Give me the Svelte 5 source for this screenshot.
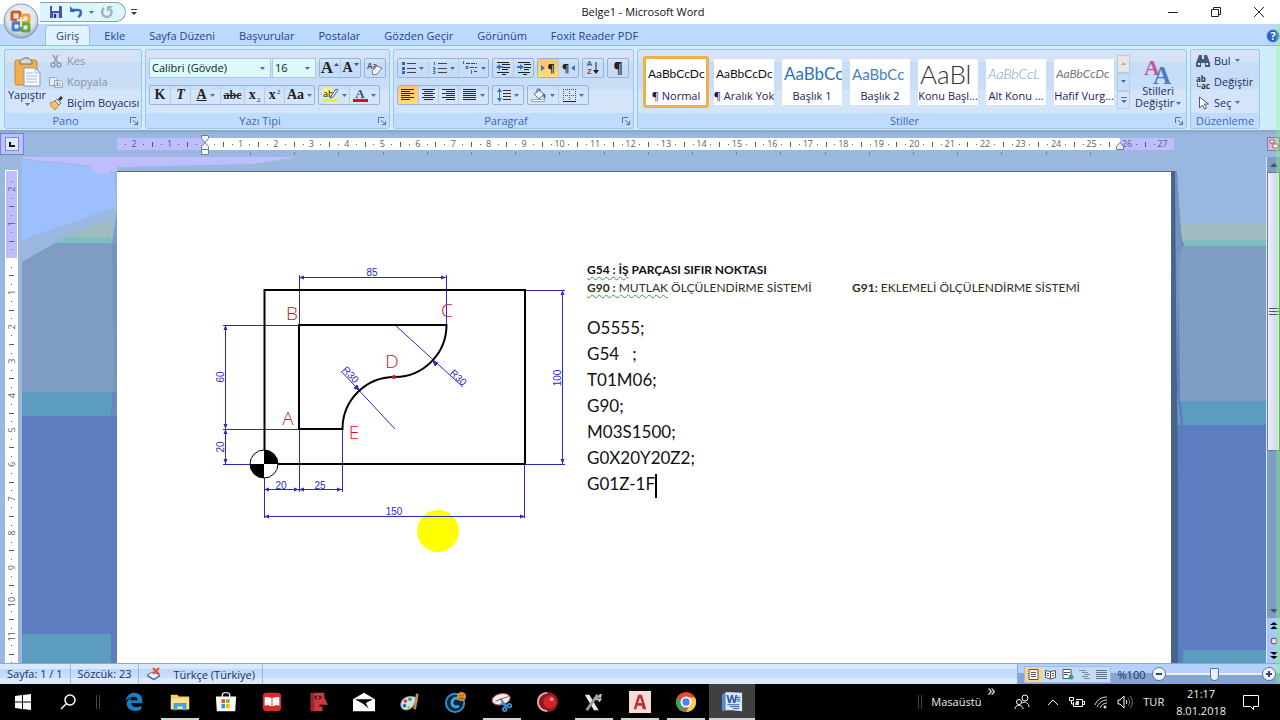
<script>
  const tabs = ['Giriş', 'Ekle', 'Sayfa Düzeni', 'Başvurular', 'Postalar', 'Gözden Geçir', 'Görünüm', 'Foxit Reader PDF'];
  let activeTab = $state('Giriş');

  const styles = [
    { name: '¶ Normal', sample: 'AaBbCcDc', kind: 'body' },
    { name: '¶ Aralık Yok', sample: 'AaBbCcDc', kind: 'body' },
    { name: 'Başlık 1', sample: 'AaBbCc', kind: 'h1' },
    { name: 'Başlık 2', sample: 'AaBbCc', kind: 'h2' },
    { name: 'Konu Başl...', sample: 'AaBl', kind: 'title' },
    { name: 'Alt Konu ...', sample: 'AaBbCcL', kind: 'subtitle' },
    { name: 'Hafif Vurg...', sample: 'AaBbCcDc', kind: 'subtle' },
  ];
  let activeStyle = $state('¶ Normal');

  const program = ['O5555;', 'G54   ;', 'T01M06;', 'G90;', 'M03S1500;', 'G0X20Y20Z2;'];

  const apps = [
    { id: 'edge', label: 'Microsoft Edge' },
    { id: 'folder', label: 'Dosya Gezgini', running: true },
    { id: 'store', label: 'Mağaza' },
    { id: 'book', label: 'Kitap' },
    { id: 'face', label: 'CNC' },
    { id: 'mail', label: 'Posta' },
    { id: 'paint', label: 'Paint' },
    { id: 'cc', label: 'C' },
    { id: 'snip', label: 'Ekran Alıntısı', running: true },
    { id: 'ball', label: 'Kayıt' },
    { id: 'x4', label: 'X4', running: true },
    { id: 'acad', label: 'AutoCAD', running: true },
    { id: 'chrome', label: 'Chrome', running: true },
    { id: 'word', label: 'Word', running: true, active: true },
  ];

  let zoom = $state(100);

  // quarter-centimetre marks: numbers on whole units, a bar on halves, dots between
  function marks(from, to, zero, unit) {
    const out = [];
    for (let q = from; q <= to; q++) {
      const type = q % 4 === 0 ? 'num' : q % 2 === 0 ? 'bar' : 'dot';
      if (q !== 0) out.push({ at: zero + (q * unit) / 4, type, n: Math.abs(q / 4) });
    }
    return out;
  }
  const across = marks(-10, 108, 88, 35.46);
  const down = marks(-9, 47, 87, 34.4);
  const tabStops = Array.from({ length: 20 }, (_, i) => 133 + i * 44.2);
</script>

{#snippet arrow()}
  <svg class="arrow" viewBox="0 0 5 3" width="5" height="3"><path d="M0 0h5L2.5 3z" fill="#4a6ea8" /></svg>
{/snippet}

{#snippet launcher(label)}
  <button class="launcher" aria-label={label}>
    <svg viewBox="0 0 8 8" width="8" height="8" fill="none" stroke="#54759f"><path d="M.5 6V.5H6M3 3l4 4M7.500 4v3.500H4" /></svg>
  </button>
{/snippet}

{#snippet lines(rows, color = '#2b2b2b')}
  <svg viewBox="0 0 14 12" width="14" height="12" stroke={color}>
    {#each rows as [x1, x2], i}
      <path d="M{x1} {i * 2 + 0.5}H{x2}" />
    {/each}
  </svg>
{/snippet}

{#snippet dim(x1, y1, x2, y2)}
  <path d="M{x1} {y1}L{x2} {y2}" />
  {#if y1 === y2}
    <path d="M{x1} {y1}l5-2v4zM{x2} {y2}l-5-2v4z" fill="#2a2ac8" stroke="none" />
  {:else}
    <path d="M{x1} {y1}l-2 5h4zM{x2} {y2}l-2-5h4z" fill="#2a2ac8" stroke="none" />
  {/if}
{/snippet}

<div class="window">
  <header class="titlebar">
    <div class="quick">
      <button aria-label="Kaydet">
        <svg viewBox="0 0 14 14" width="14" height="14"><path d="M1 1h11l1 1v11H1z" fill="#4a4fb8" /><path d="M3 1h7v5H3z" fill="#e8f4ff" /><path d="M4 8h6v5H4z" fill="#b8c8e8" /><path d="M5 9h2v4H5z" fill="#26307c" /></svg>
      </button>
      <button aria-label="Geri al">
        <svg viewBox="0 0 14 14" width="14" height="14" fill="none"><path d="M3 5h5c5-1 5 5 1 7" stroke="#3a66c4" stroke-width="2.500" /><path d="M1 5V1l5 6H1z" fill="#3a66c4" /></svg>
        {@render arrow()}
      </button>
      <button aria-label="Yinele">
        <svg viewBox="0 0 14 14" width="14" height="14" fill="none"><path d="M4 3c-4 4-1 9 3 9s6-5 3-8" stroke="#a5b4bb" stroke-width="2.500" /><path d="M7 1h6l-6 6z" fill="#a5b4bb" /></svg>
      </button>
    </div>
    <button class="customize" aria-label="Özelleştir">
      <svg viewBox="0 0 6 7" width="6" height="7"><path d="M0 0h6v1H0zM0 3h6L3 6z" fill="#333a55" /></svg>
    </button>
    <h1>Belge1 - Microsoft Word</h1>
    <div class="controls">
      <button aria-label="Simge durumuna küçült"><svg viewBox="0 0 10 10" width="10" height="10" stroke="#222"><path d="M0 5.500h10" /></svg></button>
      <button aria-label="Önceki boyut"><svg viewBox="0 0 10 10" width="10" height="10" stroke="#222" fill="none"><path d="M.5 2.500h7v7h-7zM2.500 2V.5h7v7H8" /></svg></button>
      <button aria-label="Kapat"><svg viewBox="0 0 10 10" width="10" height="10" stroke="#222"><path d="M0 0l10 10M10 0L0 10" /></svg></button>
    </div>
  </header>

  <button class="orb" aria-label="Office Düğmesi">
    <svg viewBox="0 0 36 36" width="36" height="36">
      <defs>
        <radialGradient id="orb" cx=".5" cy=".4" r=".6"><stop offset="0" stop-color="#fff" /><stop offset=".7" stop-color="#dbe4ee" /><stop offset="1" stop-color="#93a7c2" /></radialGradient>
      </defs>
      <circle cx="18" cy="18" r="17" fill="url(#orb)" stroke="#8496ae" />
      <g fill="none" stroke-width="3">
        <rect x="9" y="9" width="8" height="8" rx="1" stroke="#d9562c" />
        <rect x="19" y="12" width="7" height="7" rx="1" stroke="#eda33a" />
        <rect x="10" y="20" width="7" height="7" rx="1" stroke="#3f7ed2" />
        <rect x="19" y="21" width="7" height="7" rx="1" stroke="#63a83e" />
      </g>
      <path d="M14 17h9M18 14v10" stroke="#f7e6b8" stroke-width="2" />
    </svg>
  </button>

  <nav class="tabs">
    {#each tabs as tab}
      <button class:active={tab === activeTab} onclick={() => (activeTab = tab)}>{tab}</button>
    {/each}
    <button class="help" aria-label="Yardım">
      <svg viewBox="0 0 14 14" width="14" height="14"><circle cx="7" cy="7" r="6.500" fill="#2b62c4" stroke="#a8c4ec" /><text x="7" y="11" text-anchor="middle" font-size="11" font-weight="bold" fill="#fff">?</text></svg>
    </button>
  </nav>

  <div class="ribbon">
    <section class="group clipboard">
      <div class="body">
        <button class="paste">
          <svg viewBox="0 0 28 30" width="28" height="30"><rect x="2" y="3" width="22" height="25" rx="2" fill="#eeb04e" stroke="#c58a35" /><path d="M7 5c0-3 3-2 4-4h4c1 2 4 1 4 4v2H7z" fill="#d8d8d4" stroke="#77716a" /><path d="M11 11h11l5 5v13H11z" fill="#f8fbff" stroke="#8498bb" /><path d="M22 11v5h5M13 16h7M13 19h11M13 22h11M13 25h11" fill="none" stroke="#a9b9d6" /></svg>
          <span>Yapıştır</span>
          {@render arrow()}
        </button>
        <div class="stack">
          <button class="dim">
            <svg viewBox="0 0 14 14" width="14" height="14" fill="none" stroke="#8f9bab" stroke-width="1.500"><path d="M4 1l5 8M9 1L5 9" /><circle cx="4" cy="11" r="2" /><circle cx="10" cy="11" r="2" /></svg>Kes
          </button>
          <button class="dim">
            <svg viewBox="0 0 14 14" width="14" height="14" fill="#e4ecf6" stroke="#98a6ba"><path d="M.5 2.500h6l2 2v6h-8zM5.500 5.500h6l2 2v5h-8z" /><path d="M7 8.500h4M7 10.500h5" /></svg>Kopyala
          </button>
          <button>
            <svg viewBox="0 0 14 14" width="14" height="14"><path d="M1 7l5-2 4 4-4 5c-2-1-4-4-5-7z" fill="#f0c65a" stroke="#b78b2b" /><path d="M6 5l4 4 2-2-4-4z" fill="#dfe5ee" stroke="#68758c" /><path d="M10 4l3-3" stroke="#47362f" stroke-width="3" /></svg>Biçim Boyacısı
          </button>
        </div>
      </div>
      <footer><span>Pano</span>{@render launcher('Pano seçenekleri')}</footer>
    </section>

    <section class="group font">
      <div class="body rows">
        <div class="row">
          <div class="combos">
            <div class="combo wide">
              <select aria-label="Yazı tipi"><option>Calibri (Gövde)</option></select>
              {@render arrow()}
            </div>
            <div class="combo">
              <select aria-label="Yazı tipi boyutu"><option>16</option></select>
              {@render arrow()}
            </div>
          </div>
          <div class="box">
            <button class="serif big" aria-label="Yazı tipini büyüt">A<svg class="sup" viewBox="0 0 5 3" width="5" height="3"><path d="M0 3h5L2.500 0z" fill="#2f5597" /></svg></button>
            <button class="serif" aria-label="Yazı tipini küçült">A<svg class="sup" viewBox="0 0 5 3" width="5" height="3"><path d="M0 0h5L2.500 3z" fill="#2f5597" /></svg></button>
          </div>
          <div class="box">
            <button aria-label="Biçimlendirmeyi temizle">
              <svg viewBox="0 0 18 16" width="18" height="16"><text x="1" y="9" font-size="8" font-weight="bold" fill="#555">Aa</text><path d="M6 11l5-5 5 2-5 6-4 1z" fill="#f4f6fa" stroke="#6f7c90" /></svg>
            </button>
          </div>
        </div>
        <div class="row">
          <div class="box">
            <button class="serif"><b>K</b></button>
            <button class="serif"><i>T</i></button>
            <button class="serif drop"><u>A</u>{@render arrow()}</button>
            <button class="serif strike"><s>abc</s></button>
            <button class="serif">x<sub>2</sub></button>
            <button class="serif">x<sup>2</sup></button>
            <button class="serif drop">Aa{@render arrow()}</button>
          </div>
          <div class="box">
            <button class="drop" aria-label="Vurgu rengi">
              <svg viewBox="0 0 17 16" width="17" height="16"><path d="M1 1h9v9H1z" fill="#fff37a" /><text x="1" y="10" font-size="9" fill="#111">ab</text><path d="M9 9l5-7 2 1-5 7-3 1z" fill="#e8edf5" stroke="#52617a" /><path d="M1 12h15v3H1z" fill="#f8f400" /></svg>
              {@render arrow()}
            </button>
            <button class="drop" aria-label="Yazı tipi rengi">
              <svg viewBox="0 0 15 16" width="15" height="16"><text class="glyph" x="7" y="11" text-anchor="middle" font-size="13" fill="#2f4f8c">A</text><path d="M0 12h15v3H0z" fill="#e30b17" /></svg>
              {@render arrow()}
            </button>
          </div>
        </div>
      </div>
      <footer><span>Yazı Tipi</span>{@render launcher('Yazı tipi seçenekleri')}</footer>
    </section>

    <section class="group paragraph">
      <div class="body rows">
        <div class="row">
          <div class="box">
            <button class="drop" aria-label="Madde işaretleri">
              <svg viewBox="0 0 14 12" width="14" height="12"><path d="M0 0h3v3H0zM0 5h3v3H0zM0 9h3v3H0z" fill="#3d62a8" /><path d="M5 1.500h9M5 6.500h9M5 10.500h9" stroke="#444" /></svg>{@render arrow()}
            </button>
            <button class="drop" aria-label="Numaralandırma">
              <svg viewBox="0 0 14 12" width="14" height="12"><path d="M1.500 0v3M0 5.500h2v2H0M0 9.500h2v2H0" fill="none" stroke="#3d62a8" /><path d="M5 1.500h9M5 6.500h9M5 10.500h9" stroke="#444" /></svg>{@render arrow()}
            </button>
            <button class="drop" aria-label="Çok düzeyli liste">
              <svg viewBox="0 0 16 14" width="16" height="14"><path d="M1.500 0v3M4 5.500h2v2H4zM9.500 9v4" fill="none" stroke="#3d62a8" /><path d="M4 2.500h11M8 6.500h7M12 10.500h3" stroke="#444" stroke-dasharray="4 1" /></svg>{@render arrow()}
            </button>
          </div>
          <div class="box">
            <button aria-label="Girintiyi azalt">
              <svg viewBox="0 0 14 14" width="14" height="14"><path d="M1 1.500h12M6 3.500h8M6 6.500h8M6 8.500h6M1 11.500h12M6 13.500h4" stroke="#222" /><path d="M0 6l4-3v2h3v2H4v2z" fill="#3d72c8" /></svg>
            </button>
            <button aria-label="Girintiyi artır">
              <svg viewBox="0 0 14 14" width="14" height="14"><path d="M1 1.500h12M7 3.500h7M7 6.500h7M7 8.500h5M1 11.500h12M6 13.500h4" stroke="#222" /><path d="M7 6L3 3v2H0v2h3v2z" fill="#3d72c8" /></svg>
            </button>
          </div>
          <div class="box">
            <button class="on" aria-label="Soldan sağa"><svg viewBox="0 0 5 6" width="5" height="6"><path d="M0 0l4 3-4 3z" fill="#3d72c8" /></svg><b>¶</b></button>
            <button aria-label="Sağdan sola"><b>¶</b><svg viewBox="0 0 5 6" width="5" height="6"><path d="M5 0L1 3l4 3z" fill="#3d72c8" /></svg></button>
          </div>
          <div class="box">
            <button aria-label="Sırala">
              <span class="sort"><span>A</span><span>Z</span></span>
              <svg viewBox="0 0 6 12" width="6" height="12"><path d="M3 0v10" stroke="#222" /><path d="M0 8h6l-3 4z" fill="#222" /></svg>
            </button>
          </div>
          <div class="box"><button class="pilcrow" aria-label="Tümünü göster"><b>¶</b></button></div>
        </div>
        <div class="row">
          <div class="box">
            <button class="on" aria-label="Sola hizala">{@render lines([[0, 13], [0, 9], [0, 13], [0, 9], [0, 13], [0, 9]])}</button>
            <button aria-label="Ortala">{@render lines([[0, 13], [2, 11], [0, 13], [2, 11], [0, 13], [2, 11]])}</button>
            <button aria-label="Sağa hizala">{@render lines([[0, 13], [4, 13], [0, 13], [4, 13], [0, 13], [4, 13]])}</button>
            <button class="drop" aria-label="İki yana yasla">{@render lines([[0, 13], [0, 13], [0, 13], [0, 13], [0, 13], [0, 13]])}{@render arrow()}</button>
          </div>
          <div class="box">
            <button class="drop" aria-label="Satır aralığı">
              <svg viewBox="0 0 14 14" width="14" height="14"><path d="M2.500 2v10" stroke="#3d72c8" /><path d="M0 4l2.500-4L5 4zM0 10l2.500 4L5 10z" fill="#3d72c8" /><path d="M6 2.500h8M6 5.500h8M6 8.500h8M6 11.500h8" stroke="#333" /></svg>{@render arrow()}
            </button>
          </div>
          <div class="box">
            <button class="drop" aria-label="Gölgelendirme">
              <svg viewBox="0 0 16 14" width="16" height="14"><path d="M3 6l5-4 5 4-5 5z" fill="#edf2fa" stroke="#5c6f8d" /><path d="M6 5V1h3v3" fill="none" stroke="#5c6f8d" /><path d="M12 5c3 1 3 3 2 6-2-1-2-3-2-6z" fill="#3d6cb8" /><path d="M.5 11.500h13v2H.5z" fill="#fff" stroke="#9aa" /></svg>{@render arrow()}
            </button>
            <button class="drop" aria-label="Kenarlıklar">
              <svg viewBox="0 0 13 13" width="13" height="13" fill="none" stroke="#555"><path d="M.5 0v12M6.500 0v12M12.500 0v12M0 .5h12M0 6.500h12" stroke-dasharray="1 1" /><path d="M0 12.500h13" stroke="#222" /></svg>{@render arrow()}
            </button>
          </div>
        </div>
      </div>
      <footer><span>Paragraf</span>{@render launcher('Paragraf seçenekleri')}</footer>
    </section>

    <section class="group styles">
      <div class="body">
        <div class="gallery">
          {#each styles as style}
            <button class="card" class:selected={style.name === activeStyle} onclick={() => (activeStyle = style.name)}>
              <span class="sample {style.kind}">{style.sample}</span>
              <span class="name">{style.name}</span>
            </button>
          {/each}
        </div>
        <div class="scroller">
          <button class="off" aria-label="Yukarı"><svg viewBox="0 0 5 3" width="5" height="3"><path d="M0 3h5L2.500 0z" fill="#a9abad" /></svg></button>
          <button aria-label="Aşağı">{@render arrow()}</button>
          <button aria-label="Diğer"><svg viewBox="0 0 6 6" width="6" height="6"><path d="M0 0h6v1H0zM0 3h6L3 6z" fill="#4a6ea8" /></svg></button>
        </div>
        <button class="change">
          <svg viewBox="0 0 28 28" width="28" height="28"><text class="glyph" x="0" y="18" font-size="22" fill="#c25a9c">A</text><text class="glyph" x="9" y="27" font-size="25" fill="#4d7cc4">A</text></svg>
          <span>Stilleri</span>
          <span>Değiştir {@render arrow()}</span>
        </button>
      </div>
      <footer><span>Stiller</span>{@render launcher('Stil seçenekleri')}</footer>
    </section>

    <section class="group editing">
      <div class="body">
        <div class="stack">
          <button>
            <svg viewBox="0 0 14 14" width="14" height="14"><path d="M3 1h3v4h2V1h3l3 8v4H9V9H5v4H0V9z" fill="#44597c" /><path d="M2 10h2M10 10h2" stroke="#dbe6f5" stroke-width="2" /></svg>Bul {@render arrow()}
          </button>
          <button>
            <svg viewBox="0 0 14 14" width="14" height="14"><text x="0" y="7" font-size="8" font-weight="bold" fill="#333">ab</text><text x="5" y="14" font-size="8" font-weight="bold" fill="#333">ac</text><path d="M1.500 8v3.500H5" fill="none" stroke="#3d62a8" /></svg>Değiştir
          </button>
          <button>
            <svg viewBox="0 0 14 14" width="14" height="14"><path d="M3.500 1v11l3-3 2 4 2-1-2-4h4z" fill="#fff" stroke="#4a5670" /></svg>Seç {@render arrow()}
          </button>
        </div>
      </div>
      <footer><span>Düzenleme</span></footer>
    </section>
  </div>

  <div class="rulerbar">
    <button class="corner" aria-label="Sekme türü"><svg viewBox="0 0 14 14" width="14" height="14"><rect x=".5" y=".5" width="13" height="13" fill="#dcecff" stroke="#6f93c8" /><path d="M5 5v4h5" fill="none" stroke="#111" stroke-width="2" /></svg></button>
    <svg class="ruler" viewBox="0 0 1057 26" height="26" preserveAspectRatio="xMinYMin slice">
      <rect x="0" y="7" width="1057" height="12" fill="#bebeff" />
      <rect x="88" y="7" width="915" height="12" fill="#fff" />
      {#each across as m}
        {#if m.type === 'num'}
          <text x={m.at} y="16" text-anchor="middle">{m.n}</text>
        {:else if m.type === 'bar'}
          <rect x={Math.round(m.at)} y="11" width="1" height="5" />
        {:else}
          <rect x={Math.round(m.at)} y="13" width="1" height="1" />
        {/if}
      {/each}
      {#each tabStops as x}
        <rect x={Math.round(x)} y="21" width="1" height="3" fill="#6a83a8" />
      {/each}
      <path d="M84.500 4.500h7v3l-3.500 4-3.500-4zM84.500 18.500v-3l3.500-4 3.500 4v3zM84.500 18.500h7v5h-7z" fill="#f3f6fb" stroke="#6c7f9e" />
      <path d="M999.500 18.500v-3l3.500-4 3.500 4v3z" fill="#e4ebf6" stroke="#6c7f9e" />
    </svg>
    <button class="toggle" aria-label="Cetvel"><svg viewBox="0 0 13 14" width="13" height="14"><rect x=".5" y=".5" width="12" height="13" fill="#c9bfd6" stroke="#7c7c98" /><path d="M3 3h4v3H3zM6 7h5v4H6z" fill="#fff" stroke="#b04c78" /></svg></button>
  </div>

  <main class="workspace">
    <svg class="vruler" viewBox="0 157 22 506" width="22" preserveAspectRatio="xMinYMin slice">
      <rect x="5" y="170" width="13" height="600" fill="#fff" />
      <rect x="6" y="171" width="11" height="87" fill="#bebeff" />
      <g transform="translate(0 171)">
        {#each down as m}
          {#if m.type === 'num'}
            <text transform="translate(15 {m.at}) rotate(-90)" text-anchor="middle">{m.n}</text>
          {:else if m.type === 'bar'}
            <rect x="9" y={Math.round(m.at)} width="5" height="1" />
          {:else}
            <rect x="11" y={Math.round(m.at)} width="1" height="1" />
          {/if}
        {/each}
      </g>
    </svg>

    <div class="canvas">
      <svg class="sky" viewBox="22 157 1244 14" height="14" preserveAspectRatio="xMinYMin slice">
        <path d="M22 155h290l-60 9-135 3v4H94l-4-5-22-3-28-2-18-3z" fill="#bebeff" />
        <path d="M22 159l18 3 28 2 22 3 4 4H22z" fill="#9dbeff" />
      </svg>
      <div class="desk">
        <svg class="side" viewBox="22 171 95 492" width="95" preserveAspectRatio="xMinYMin slice">
          <rect x="22" y="171" width="95" height="900" fill="#5c7dbf" />
          <path d="M22 171h95v221H22z" fill="#7f9dc0" />
          <path d="M22 171h95v72H55l-33 19z" fill="#9ab7df" />
          <path d="M22 171h92l2 36-94 33z" fill="#9dbeff" />
          <path d="M90 171h20l-3 4-6-1z" fill="#bebeff" />
          <path d="M65 237l35-14 12-3-1 17z" fill="#9fbdbf" />
          <path d="M65 237h46v6H55z" fill="#7dbfbf" />
          <path d="M22 392h91l-2 24H22zM22 634h89v100H22z" fill="#5c9dbf" />
          <path d="M117 171v40l-5 32 2 149-3 24h6z" fill="#6f8fc0" opacity=".7" />
        </svg>
        <article class="page">
          <svg class="drawing" viewBox="215 265 355 290" width="355" height="290">
            <circle cx="438" cy="531" r="21" fill="#ffff00" />
            <g fill="none" stroke="#2a2ac8">
              <path d="M299.500 325V275M446.500 325V275M223 325.500h76M223 429.500h76M223 464.500h42M525 290.500h40M525 464.500h40M299.500 429v63M342.500 429v63M264.500 464v54M524.500 464v54" />
              {@render dim(299, 277.5, 446, 277.5)}
              {@render dim(225.5, 325, 225.5, 429)}
              {@render dim(225.5, 429, 225.5, 464)}
              {@render dim(562.5, 290, 562.5, 464)}
              {@render dim(264, 489.5, 299, 489.5)}
              {@render dim(299, 489.5, 342, 489.5)}
              {@render dim(264, 516.5, 525, 516.5)}
              <path d="M395 429l-54-58M395 325l68 62" />
              <path d="M359 390l-5-2 3-3zM433 361l5 2-3 3z" fill="#2a2ac8" />
            </g>
            <g class="figures" text-anchor="middle">
              <text x="372" y="276">85</text>
              <text x="281" y="489">20</text>
              <text x="320" y="489">25</text>
              <text x="394" y="515">150</text>
              <text transform="translate(224 377) rotate(-90)">60</text>
              <text transform="translate(224 447) rotate(-90)">20</text>
              <text transform="translate(561 378) rotate(-90)">100</text>
              <text transform="translate(348 377) rotate(47)">R30</text>
              <text transform="translate(456 380) rotate(43)">R30</text>
            </g>
            <g fill="none" stroke="#000" stroke-width="2">
              <path d="M264.500 290h260.500v174H264.500z" />
              <path d="M446 325H299v104h43.500A52 52 0 0 1 395 377A52 52 0 0 0 446.500 325z" />
            </g>
            <circle cx="264" cy="464" r="14" fill="#fff" stroke="#000" />
            <path d="M264 464v-14a14 14 0 0 1 14 14zM264 464v14a14 14 0 0 1-14-14z" />
            <circle cx="394" cy="377" r="2" fill="#d8141c" />
            <g class="points" text-anchor="middle">
              <text x="292" y="320">B</text>
              <text x="447" y="317">C</text>
              <text x="392" y="368">D</text>
              <text x="288" y="425">A</text>
              <text x="354" y="439">E</text>
            </g>
          </svg>
          <div class="text">
            <p><b><span class="wavy">G54 : İŞ</span> PARÇASI SIFIR NOKTASI</b></p>
            <div class="systems">
              <p><span class="wavy"><b>G90 :</b> MUTLAK</span> ÖLÇÜLENDİRME SİSTEMİ</p>
              <p><b>G91:</b> EKLEMELİ ÖLÇÜLENDİRME SİSTEMİ</p>
            </div>
            <div class="program">
              {#each program as line}
                <p>{line}</p>
              {/each}
              <p class="typing">G01Z-1F</p>
            </div>
          </div>
        </article>
        <svg class="side" viewBox="1172 171 94 492" width="94" preserveAspectRatio="xMinYMin slice">
          <rect x="1172" y="171" width="94" height="900" fill="#5c7dbf" />
          <path d="M1172 171h94v54h-94z" fill="#9ab7df" />
          <path d="M1180 224h86v16h-84z" fill="#9fbdbf" />
          <path d="M1182 240h84v6h-82z" fill="#7fbfbf" />
          <path d="M1178 246h88v155h-86z" fill="#7f9dc0" />
          <path d="M1181 401h85v24h-83zM1183 650h83v90h-83z" fill="#5c9dbf" />
          <path d="M1172 171h5l4 60 1 15-3 20-2 124 4 35h-9z" fill="#7392c0" />
          <path d="M1172 171h3l1 130 2 180v500h-6z" fill="#45658f" />
        </svg>
      </div>
    </div>

    <div class="scrollbar">
      <button aria-label="Yukarı kaydır"><svg viewBox="0 0 8 4" width="8" height="4"><path d="M0 4h8L4 0z" fill="#3c5270" /></svg></button>
      <div class="thumb"><svg viewBox="0 0 10 7" width="10" height="7" stroke="#556"><path d="M0 .5h10M0 3.500h10M0 6.500h10" /></svg></div>
      <div class="track"></div>
      <button aria-label="Aşağı kaydır"><svg viewBox="0 0 8 4" width="8" height="4"><path d="M0 0h8L4 4z" fill="#3c5270" /></svg></button>
      <div class="browse">
        <button aria-label="Önceki sayfa"><svg viewBox="0 0 8 7" width="8" height="7"><path d="M0 3h8L4 0zM0 7h8L4 4z" /></svg></button>
        <button aria-label="Gözatma nesnesi"><svg viewBox="0 0 8 8" width="8" height="8"><circle cx="4" cy="4" r="3" fill="#d8dde8" stroke="#803c50" /></svg></button>
        <button aria-label="Sonraki sayfa"><svg viewBox="0 0 8 7" width="8" height="7"><path d="M0 0h8L4 3zM0 4h8L4 7z" /></svg></button>
      </div>
    </div>
  </main>

  <div class="statusbar">
    <span class="cell">Sayfa: 1 / 1</span>
    <span class="cell">Sözcük: 23</span>
    <span class="cell lang">
      <svg viewBox="0 0 16 14" width="16" height="14"><path d="M1 8l6-3 7 3-6 4z" fill="#f2f6fc" stroke="#4f6ca0" /><path d="M1 9l7 4 6-4" fill="none" stroke="#4f6ca0" /><path d="M7 1l6 6M13 1L7 7" stroke="#e8502e" stroke-width="2" /></svg>
      Türkçe (Türkiye)
    </span>
    <div class="view">
      <div class="modes">
        <button class="on" aria-label="Sayfa Düzeni"><svg viewBox="0 0 11 11" width="11" height="11"><path d="M1 .5h9v10H1z" fill="#fff" stroke="#555" /><path d="M3 3.500h5M3 5.500h5M3 7.500h5" stroke="#555" /></svg></button>
        <button aria-label="Tam Ekran Okuma"><svg viewBox="0 0 12 11" width="12" height="11"><path d="M.5 1.500l5 1 5-1v7l-5 1.500-5-1.500z" fill="#fff" stroke="#555" /><path d="M5.500 2v8M2 4.500h2M2 6.500h2M7 4.500h2M7 6.500h2" stroke="#555" /></svg></button>
        <button aria-label="Web Düzeni"><svg viewBox="0 0 12 11" width="12" height="11"><path d="M1 .5h8v9H1z" fill="#fff" stroke="#555" /><path d="M2 3.500h6M2 5.500h4" stroke="#555" /><circle cx="9" cy="8" r="2.500" fill="#3b9a8d" /></svg></button>
        <button aria-label="Anahat"><svg viewBox="0 0 11 11" width="11" height="11" stroke="#7c8ba5"><path d="M0 1.500h7M3 3.500h6M5 5.500h6M3 7.500h6M5 9.500h6" /></svg></button>
        <button aria-label="Taslak"><svg viewBox="0 0 11 11" width="11" height="11" stroke="#6c7484"><path d="M0 1.500h11M0 3.500h11M0 5.500h11M0 7.500h11M0 9.500h11" /></svg></button>
      </div>
      <span class="percent">%{zoom}</span>
      <button class="round" aria-label="Uzaklaştır" onclick={() => (zoom -= 10)}><svg viewBox="0 0 14 14" width="14" height="14"><circle cx="7" cy="7" r="6.500" fill="#eef4fc" stroke="#5d7299" /><path d="M4 7h6" stroke="#3a4a6c" stroke-width="2" /></svg></button>
      <input type="range" aria-label="Yakınlaştır" min="0" max="200" bind:value={zoom} />
      <button class="round" aria-label="Yakınlaştır" onclick={() => (zoom += 10)}><svg viewBox="0 0 14 14" width="14" height="14"><circle cx="7" cy="7" r="6.500" fill="#eef4fc" stroke="#5d7299" /><path d="M4 7h6M7 4v6" stroke="#3a4a6c" stroke-width="2" /></svg></button>
    </div>
  </div>

  <div class="taskbar">
    <button class="start" aria-label="Başlat"><svg viewBox="0 0 16 16" width="16" height="16" fill="#fff"><path d="M0 2l7-1v6.500H0zM8 1l8-1v7.500H8zM0 8.500h7V15l-7-1zM8 8.500h8V16l-8-1z" /></svg></button>
    <button class="start" aria-label="Ara"><svg viewBox="0 0 16 16" width="16" height="16" fill="none" stroke="#fff" stroke-width="1.500"><circle cx="10" cy="6" r="5" /><path d="M6.500 9.500L1 15" /></svg></button>
    <span class="grip"></span>
    {#each apps as app}
      <button class="app" class:running={app.running} class:active={app.active} aria-label={app.label}>
        <svg viewBox="0 0 24 24" width="22" height="22">
          {#if app.id === 'edge'}
            <path d="M3 11C4 5 8 2 12 2c6 0 10 4 9 11H9c0 4 6 6 11 3v4c-7 4-16 1-16-6 0-3 2-6 6-7-1 1-2 2-2 3h8c0-5-8-5-13 1z" fill="#1580c8" />
          {:else if app.id === 'folder'}
            <path d="M2 4h7l2 2h11v14H2z" fill="#f3cf6c" /><path d="M2 8h20v12H2z" fill="#fbe08e" /><path d="M5 13h14v8h-4v-4H9v4H5z" fill="#3fa7de" />
          {:else if app.id === 'store'}
            <path d="M8 8V4c0-3 8-3 8 0v4" fill="none" stroke="#ddd" stroke-width="1.500" /><path d="M1 6h22l-1 16H2z" fill="#fff" /><path d="M7 9h4v4H7z" fill="#e74a2b" /><path d="M12 9h4v4h-4z" fill="#76b72a" /><path d="M7 14h4v5H7z" fill="#29a3e0" /><path d="M12 14h4v5h-4z" fill="#f7b500" />
          {:else if app.id === 'book'}
            <rect x="2" y="2" width="20" height="20" rx="4" fill="#d92a2e" /><path d="M4 7c3-1 6 0 8 1 2-1 5-2 8-1v9c-3-1-6 0-8 1-2-1-5-2-8-1z" fill="#fff" /><path d="M12 8v9" stroke="#d92a2e" />
          {:else if app.id === 'face'}
            <path d="M4 2h15v5l4 8H14l-1 2h4v5H4z" fill="#c9393d" /><path d="M4 2h4v20H4z" fill="#97292e" /><ellipse cx="12" cy="7" rx="4" ry="2" fill="#5b1a1e" /><circle cx="12" cy="7" r="1" fill="#d88" />
          {:else if app.id === 'mail'}
            <path d="M0 9l12-7 12 7v13H0z" fill="#fff" /><path d="M2 9h20l-8 4 3 6-6-5z" />
          {:else if app.id === 'paint'}
            <path d="M2 15c0-7 8-11 16-8 4 3 1 6-2 7 0 7-14 10-14 1z" fill="#cde3ef" stroke="#8aa9bf" /><circle cx="7" cy="11" r="2" fill="#d9443a" /><circle cx="12" cy="9" r="2" fill="#4c9a3c" /><circle cx="6" cy="16" r="2" fill="#3868b8" /><circle cx="11" cy="18" r="2" fill="#e6b332" /><path d="M17 20l3-17" stroke="#c28a45" stroke-width="3" />
          {:else if app.id === 'cc'}
            <circle cx="11" cy="13" r="10" fill="#0d2738" stroke="#2a98d8" stroke-width="2" /><path d="M15 9c-4-3-9 1-7 6 1 3 5 3 7 1" fill="none" stroke="#3aabea" stroke-width="3" /><circle cx="18" cy="6" r="5" fill="#d98b2b" /><path d="M16 5h1M19 5h1M16 8h4" stroke="#5d3610" />
          {:else if app.id === 'snip'}
            <ellipse cx="11" cy="9" rx="10" ry="6" fill="#f5eeee" stroke="#b3535a" transform="rotate(-12 11 9)" /><path d="M5 11l14-5M10 8l6 7" stroke="#a33" /><g fill="none" stroke="#3c8cc8" stroke-width="2"><circle cx="15" cy="20" r="2" /><circle cx="20" cy="16" r="2" /><path d="M11 9l5 9M10 14l9 2" /></g>
          {:else if app.id === 'ball'}
            <circle cx="12" cy="12" r="11" fill="#8f1a1e" /><path d="M11 2a10 10 0 0 0 0 20" fill="none" stroke="#e8b3b0" stroke-width="2" /><circle cx="14" cy="12" r="7" fill="#d6232a" /><circle cx="16" cy="9" r="2" fill="#f2a19e" />
          {:else if app.id === 'x4'}
            <path d="M2 4h5l10 17h-5z" fill="#ececec" /><path d="M16 4L4 21" stroke="#9a9a9a" stroke-width="3" /><text x="14" y="12" font-size="12" font-weight="bold" font-style="italic" fill="#c8c8c8">4</text>
          {:else if app.id === 'acad'}
            <path d="M0 0h24v24H0z" fill="#f8dcd8" /><path d="M5 20L10 4h4l5 16h-4l-1-4H9l-1 4zM10 13h4l-2-6z" fill="#b8323a" fill-rule="evenodd" />
          {:else if app.id === 'chrome'}
            <circle cx="12" cy="12" r="11" fill="#e8483c" /><path d="M2.500 6.500l5.500 9.500L12 23A11 11 0 0 1 2.500 6.500z" fill="#3ba55a" /><path d="M12 23l4.500-8.500L14 7h7.800A11 11 0 0 1 12 23z" fill="#fbd043" /><circle cx="12" cy="12" r="6" fill="#fff" /><circle cx="12" cy="12" r="4" fill="#4688f1" />
          {:else}
            <path d="M5 1l18 1v20l-10-1H1z" fill="#dbe7f8" /><path d="M1 4l4-3v21l-4-1z" fill="#5b89cf" /><text x="6" y="13" font-size="12" font-weight="bold" fill="#2a4f9f">W</text><path d="M17 7h4M17 9h4M17 11h4M7 15h13M10 17h10M13 19h7" stroke="#2a58a8" />
          {/if}
        </svg>
      </button>
    {/each}
    <div class="tray">
      <span class="grip"></span>
      <span class="desktop">Masaüstü</span>
      <span class="more">»</span>
      <button aria-label="Kişiler"><svg viewBox="0 0 16 16" width="16" height="16" fill="none" stroke="#fff"><circle cx="5" cy="8" r="2.500" /><circle cx="11" cy="4" r="3" /><path d="M1 15c0-5 8-5 8 0M8 9c3-2 7 0 7 4" /></svg></button>
      <button aria-label="Gizli simgeler"><svg viewBox="0 0 12 8" width="12" height="8" fill="none" stroke="#fff"><path d="M1 7l5-5 5 5" /></svg></button>
      <button aria-label="Pil"><svg viewBox="0 0 16 12" width="16" height="12" fill="none" stroke="#fff"><path d="M4.500 6v4.500h9v-7H7M14 5.500h1.500v3H14" /><path d="M7 5h3v4H6z" fill="#ddd" stroke="none" /><path d="M.5 1.500h4v3h-4zM2.500 5v3h2" /></svg></button>
      <button aria-label="Ağ"><svg viewBox="0 0 14 14" width="14" height="14" fill="none" stroke="#ddd"><path d="M1 10C3 5 7 2 13 2M3 12c2-4 5-7 10-7M6 13c1-3 4-5 7-5" /><circle cx="11" cy="12" r="1.500" fill="#ddd" stroke="none" /></svg></button>
      <button aria-label="Ses"><svg viewBox="0 0 16 14" width="16" height="14" fill="none" stroke="#fff"><path d="M1 5h2l4-4v12L3 9H1zM9 5c1 1 1 3 0 4" /><path d="M11 3c2 2 2 6 0 8M13 1c3 3 3 9 0 12" stroke="#777" /></svg></button>
      <span class="lang-code">TUR</span>
      <span class="clock"><span>21:17</span><span>8.01.2018</span></span>
      <button class="notes" aria-label="Bildirimler"><svg viewBox="0 0 16 16" width="16" height="16" fill="none" stroke="#fff"><path d="M.5 1.500h15v11h-5v3l-3-3h-7z" /></svg></button>
    </div>
  </div>
</div>

<style>
  :global(body) {
    margin: 0;
  }

  .window {
    position: relative;
    display: flex;
    flex-direction: column;
    height: 100vh;
    overflow: hidden;
    background: #9ab7df;
    color: #1c2f66;
    font: 11px/16px "Open Sans", "Noto Sans", sans-serif;
  }

  /* green fringe along the right edge of the screen */
  .window::after {
    content: "";
    position: absolute;
    top: 24px;
    right: 0;
    bottom: 36px;
    width: 4px;
    background: rgba(130, 255, 110, 0.35);
    pointer-events: none;
  }

  button {
    display: flex;
    align-items: center;
    justify-content: center;
    margin: 0;
    padding: 0;
    border: 0;
    background: none;
    color: inherit;
    font: inherit;
    white-space: nowrap;
  }

  p {
    margin: 0;
  }

  svg {
    flex: none;
  }

  .titlebar {
    flex: none;
    display: grid;
    grid-template-columns: 40px 86px 16px 1fr 128px;
    align-items: center;
    height: 24px;
    background: #fff;
  }

  .quick {
    grid-column: 2;
    display: flex;
    justify-content: space-between;
    height: 20px;
    padding: 0 11px 0 9px;
    border: 1px solid #8f9da6;
    border-left: 0;
    border-radius: 0 10px 10px 0;
    background: #dcf7fb;
    box-sizing: border-box;
  }

  .quick button {
    gap: 6px;
  }

  .titlebar h1 {
    margin: 0;
    padding-right: 8px;
    color: #111;
    font-size: 11px;
    font-weight: 400;
    text-align: center;
  }

  .controls {
    display: flex;
  }

  .controls button {
    width: 43px;
    height: 24px;
  }

  .orb {
    position: absolute;
    top: 3px;
    left: 3px;
    z-index: 1;
  }

  .tabs {
    flex: none;
    display: flex;
    height: 22px;
    padding: 2px 0 0 46px;
    background: #bdd9ff;
    border-bottom: 1px solid #8fb8ea;
    box-sizing: border-box;
    color: #27457f;
  }

  .tabs button {
    padding: 0 12px;
  }

  .tabs .active {
    padding: 0 10px;
    margin-right: 3px;
    border-radius: 3px 3px 0 0;
    background: #e2f3fd;
    box-shadow: 0 0 0 1px #96bdec;
  }

  .tabs .help {
    margin-left: auto;
    padding: 0;
  }

  .ribbon {
    flex: none;
    display: flex;
    gap: 3px;
    padding: 3px 4px 1px;
    background: #cfeefb;
    border-bottom: 1px solid #8ba5c8;
  }

  .group {
    display: flex;
    flex-direction: column;
    border: 1px solid #a5c3e8;
    border-radius: 3px;
    background: linear-gradient(#d4e3f5 12px, #c6dcf7 12px, #c9def7 40px, #d5e5f9 40px);
    overflow: hidden;
    box-sizing: border-box;
  }

  .clipboard {
    width: 138px;
  }

  .font {
    width: 245px;
  }

  .paragraph {
    width: 241px;
  }

  .styles {
    width: 550px;
  }

  .editing {
    width: 70px;
  }

  .body {
    display: flex;
    height: 63px;
  }

  .rows {
    flex-direction: column;
    gap: 7px;
    padding: 8px 3px 0;
    box-sizing: border-box;
  }

  .row {
    display: flex;
    gap: 3px;
  }

  .group footer {
    display: flex;
    align-items: center;
    height: 15px;
    background: #bfdbff;
    color: #3c68ab;
  }

  .group footer span {
    flex: 1;
    text-align: center;
  }

  .launcher {
    width: 15px;
  }

  .paste {
    flex-direction: column;
    width: 44px;
  }

  .stack {
    display: flex;
    flex-direction: column;
    justify-content: space-around;
  }

  .stack button {
    justify-content: flex-start;
    gap: 4px;
    height: 20px;
  }

  .dim {
    color: #8a93a1;
  }

  .combos {
    display: flex;
    gap: 1px;
  }

  .combo {
    display: flex;
    align-items: center;
    width: 44px;
    height: 20px;
    padding-right: 5px;
    border: 1px solid #aac6e8;
    background: #dbfaf8;
    box-sizing: border-box;
  }

  .combo.wide {
    width: 122px;
  }

  .combo select {
    flex: 1;
    min-width: 0;
    height: 18px;
    padding: 0 0 0 2px;
    border: 0;
    background: none;
    appearance: none;
    color: #14182c;
    font: inherit;
  }

  .box {
    display: flex;
    height: 20px;
    border: 1px solid #96b3dc;
    border-radius: 2px;
    box-sizing: border-box;
  }

  .box svg,
  .change svg {
    overflow: visible;
  }

  .box button {
    min-width: 20px;
    gap: 1px;
    color: #222;
  }

  .box button + button {
    border-left: 1px solid #b5cdec;
  }

  .box .drop {
    min-width: 30px;
    gap: 3px;
  }

  .box .on {
    background: linear-gradient(#fbc46c, #fddc80);
  }

  .box .serif {
    font-family: "Liberation Serif", serif;
    font-size: 14px;
    font-weight: 700;
  }

  .box .big {
    font-size: 17px;
  }

  .box .strike {
    min-width: 24px;
    font-size: 12px;
  }

  .box .pilcrow {
    font-size: 14px;
  }

  .sort {
    display: flex;
    flex-direction: column;
    color: #b03048;
    font: 700 8px/8px "Liberation Sans", sans-serif;
  }

  .sort span:first-child {
    color: #2f5fb4;
  }

  .sup {
    align-self: flex-start;
    margin-top: 4px;
  }

  sub,
  sup {
    color: #2f5597;
    font-size: 7px;
    line-height: 7px;
  }

  sub {
    align-self: flex-end;
  }

  sup {
    align-self: flex-start;
    margin-top: 3px;
  }

  .glyph {
    font-family: "Liberation Serif", serif;
    font-weight: 700;
  }

  .gallery {
    display: flex;
    align-items: center;
    gap: 2px;
    padding-left: 5px;
  }

  .card {
    flex-direction: column;
    width: 66px;
    height: 52px;
    border: 3px solid transparent;
    background: #fff padding-box;
    box-sizing: border-box;
    color: #1b1b5c;
  }

  .card.selected {
    border-color: #edb04a;
    border-radius: 3px;
  }

  .sample {
    width: 60px;
    height: 28px;
    overflow: hidden;
    font-family: Lato, sans-serif;
    line-height: 28px;
    text-align: left;
    text-indent: 2px;
  }

  .body .sample.body {
    display: block;
    color: #111;
    font-size: 12px;
  }

  .h1 {
    color: #2e74b5;
    font-size: 17px;
  }

  .h2 {
    color: #4483bd;
    font-size: 15px;
  }

  .title {
    color: #333;
    font-size: 26px;
    font-weight: 300;
  }

  .subtitle {
    color: #6f9acb;
    font-size: 14px;
    font-style: italic;
    font-weight: 300;
  }

  .subtle {
    color: #777;
    font-size: 12px;
    font-style: italic;
  }

  .scroller {
    display: flex;
    flex-direction: column;
    justify-content: center;
    padding: 0 5px 0 0;
  }

  .scroller button {
    width: 13px;
    height: 18px;
    border: 1px solid #b5cbe8;
    box-sizing: border-box;
  }

  .scroller .off {
    background: #e8e6e0;
  }

  .change {
    flex-direction: column;
    padding-top: 3px;
    line-height: 12px;
  }

  .change span {
    display: flex;
    align-items: center;
    gap: 2px;
  }

  .editing .stack {
    padding-left: 5px;
  }

  .rulerbar {
    flex: none;
    display: flex;
    height: 26px;
    background: linear-gradient(#8fa8d0, #9ab7df 4px);
  }

  .ruler {
    flex: 1;
    min-width: 0;
  }

  .ruler,
  .vruler {
    fill: #555f74;
    font-size: 9px;
  }

  .corner {
    width: 24px;
    height: 22px;
    margin: 2px 93px 0 0;
    border: 1px solid #6f86c8;
    background: #bebeff;
    box-sizing: border-box;
  }

  .toggle {
    margin-left: 93px;
  }

  .workspace {
    flex: 1;
    display: flex;
    min-height: 0;
  }

  .vruler {
    height: 100%;
  }

  .canvas {
    flex: 1;
    display: flex;
    flex-direction: column;
    min-width: 0;
  }

  .sky {
    width: 100%;
  }

  .desk {
    flex: 1;
    display: flex;
    min-height: 0;
  }

  .side {
    height: 100%;
  }

  .page {
    flex: 1;
    display: flex;
    align-items: flex-start;
    gap: 17px;
    padding: 89px 0 0 98px;
    border: 1px solid #55677f;
    border-width: 1px 1px 0 0;
    background: #fff;
    box-sizing: border-box;
    color: #111;
  }

  .drawing {
    margin-top: 4px;
  }

  .figures {
    fill: #2a2ac8;
    font: 10px "Liberation Sans", sans-serif;
  }

  .points {
    fill: #d8141c;
    font: 300 19px "Open Sans", sans-serif;
  }

  .text {
    font: 12px/18px Lato, sans-serif;
    white-space: nowrap;
  }

  .systems {
    display: grid;
    grid-template-columns: 265px auto;
    color: #2a3318;
  }

  .wavy {
    text-decoration: underline wavy #3a9a4a 1px;
    text-underline-offset: 2px;
  }

  .program {
    margin-top: 18px;
    font-size: 17px;
    line-height: 26px;
  }

  .program p {
    white-space: pre;
  }

  .typing::after {
    content: "";
    display: inline-block;
    width: 2px;
    height: 24px;
    background: #000;
    vertical-align: middle;
  }

  .scrollbar {
    display: flex;
    flex-direction: column;
    width: 14px;
    background: #7f9dc0;
    border-left: 1px solid #d8e6f8;
    box-sizing: border-box;
  }

  .scrollbar button {
    height: 15px;
  }

  .thumb {
    flex: 278;
    display: flex;
    align-items: center;
    justify-content: flex-end;
    border: 1px solid #6d7c96;
    background: linear-gradient(90deg, #eef1fa, #d4daf0 7px, #eef8ee);
  }

  .track {
    flex: 152;
  }

  .browse {
    display: flex;
    flex-direction: column;
    background: #a8c6fb;
  }

  .statusbar {
    flex: none;
    display: flex;
    height: 21px;
    border-top: 1px solid #8ba8cf;
    background: linear-gradient(#d9e8fb 5px, #bcd8fb 5px, #c8dffb 14px, #dbe9fb 14px);
    box-sizing: border-box;
    line-height: 19px;
  }

  .cell {
    padding: 0 7px;
    border-right: 1px solid #9dbade;
  }

  .lang {
    display: flex;
    align-items: center;
    gap: 11px;
  }

  .view {
    display: flex;
    align-items: center;
    margin-left: auto;
    padding: 0 4px 0 6px;
    border-left: 1px solid #8ba8cf;
    background: linear-gradient(#b3d1fb 9px, #86a5d2 9px);
  }

  .modes {
    display: flex;
    border: 1px solid #9fbce4;
    background: #c5dcf8;
  }

  .modes button {
    width: 17px;
    height: 15px;
  }

  .modes .on {
    background: #fbd48a;
  }

  .percent {
    width: 41px;
    text-align: center;
  }

  .view input {
    width: 96px;
    height: 14px;
    margin: 0;
    appearance: none;
    background: linear-gradient(transparent 6px, #e9f1fb 6px, #e9f1fb 8px, transparent 8px);
  }

  .view input::-webkit-slider-thumb {
    appearance: none;
    width: 9px;
    height: 13px;
    border: 1px solid #5d7299;
    border-radius: 1px 1px 4px 4px;
    background: #e6eefa;
    box-sizing: border-box;
  }

  .taskbar {
    flex: none;
    display: flex;
    align-items: center;
    height: 36px;
    background: #000;
    color: #eee;
  }

  .start {
    width: 45px;
    height: 36px;
  }

  .grip {
    width: 2px;
    height: 14px;
    margin: 0 11px 0 6px;
    border: 1px solid #444;
    border-width: 0 1px;
  }

  .app {
    position: relative;
    width: 46px;
    height: 36px;
  }

  .app.running::after {
    content: "";
    position: absolute;
    right: 4px;
    bottom: 0;
    left: 4px;
    height: 2px;
    background: #d4d4d4;
  }

  .app.active {
    background: #404040;
  }

  .app.active::after {
    right: 0;
    left: 0;
  }

  .tray {
    display: flex;
    align-items: center;
    margin-left: auto;
    padding-right: 17px;
  }

  .tray .grip {
    margin: 0 9px 0 0;
  }

  .more {
    align-self: flex-start;
    padding: 0 8px 0 6px;
    font-size: 16px;
    line-height: 12px;
  }

  .tray button {
    width: 24px;
    height: 36px;
  }

  .tray button:first-of-type {
    width: 38px;
  }

  .lang-code {
    padding: 0 12px 0 6px;
  }

  .clock {
    display: flex;
    flex-direction: column;
    align-items: center;
    padding-right: 13px;
    line-height: 17px;
  }
</style>
